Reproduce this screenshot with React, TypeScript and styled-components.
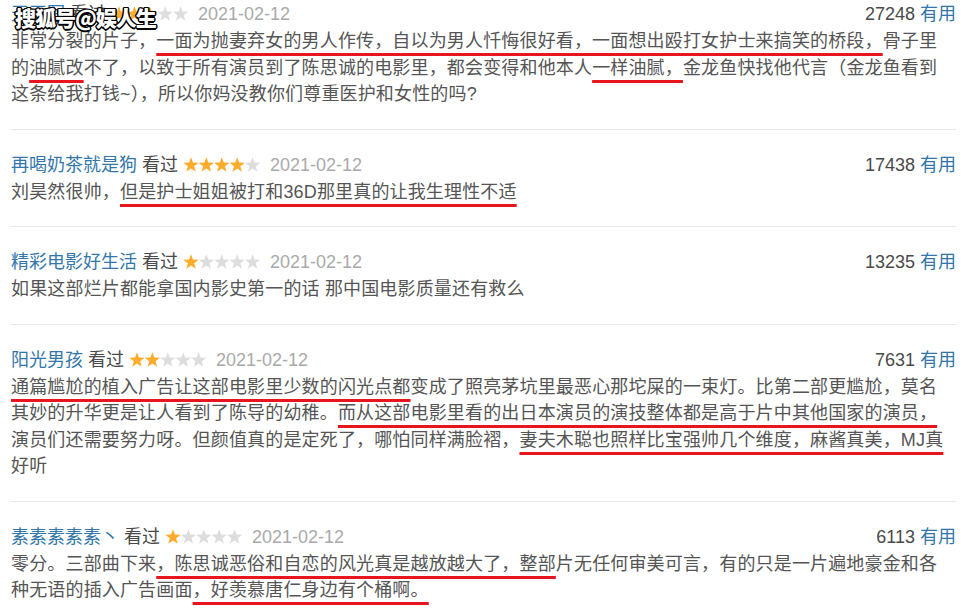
import React from "react";
import styled, { createGlobalStyle } from "styled-components";

const GlobalStyle = createGlobalStyle`
  html, body {
    margin: 0;
    padding: 0;
    background: #fff;
  }
  body {
    font-family: "Liberation Sans", "Noto Sans CJK SC", sans-serif;
  }
`;

const Page = styled.div`
  position: relative;
  width: 969px;
  height: 612px;
  overflow: hidden;
  box-sizing: border-box;
  padding: 1px 13px 0 11px;
`;

const Item = styled.div`
  padding: 22px 0 21px;
  border-bottom: 1px solid #e8e8e8;
  &:first-child {
    padding-top: 0;
  }
`;

const Header = styled.div`
  display: flex;
  align-items: center;
  height: 27px;
  font-size: 18px;
  line-height: 27px;
  white-space: nowrap;
`;

const Name = styled.span`
  color: #3377aa;
`;

const Watched = styled.span`
  color: #494949;
  margin-left: 5px;
`;

const StarRow = styled.svg`
  margin: 0 9px 1px 5px;
  flex: none;
`;

const DateText = styled.span`
  color: #aaa;
`;

const Votes = styled.span`
  margin-left: auto;
  color: #494949;
`;

const Useful = styled.span`
  color: #3377aa;
  margin-left: 5px;
`;

const Body = styled.p`
  margin: 0;
  padding-right: 8px;
  font-size: 18px;
  line-height: 26.5px;
  letter-spacing: 0.16px;
  color: #555;
`;

const Mark = styled.span`
  text-decoration: underline;
  text-decoration-color: #e8141e;
  text-decoration-thickness: 3px;
  text-underline-offset: 6px;
  text-decoration-skip-ink: none;
`;

const Watermark = styled.div`
  position: absolute;
  left: 15px;
  top: 4px;
  font-family: "Noto Sans CJK SC", sans-serif;
  font-size: 21px;
  font-weight: 900;
  line-height: 26px;
  color: #fff;
  letter-spacing: -1px;
  text-shadow: 1.5px 0 0 #000, -1.5px 0 0 #000, 0 1.5px 0 #000, 0 -1.5px 0 #000, 1px 1px 0 #000, -1px -1px 0 #000,
    1px -1px 0 #000, -1px 1px 0 #000;
`;

const STAR = "M8 0.2L9.95 5.6L15.7 5.8L11.15 9.3L12.75 14.8L8 11.55L3.25 14.8L4.85 9.3L0.3 5.8L6.05 5.6Z";

const Stars: React.FC<{ value: number }> = ({ value }) => (
  <StarRow width="78" height="16" viewBox="0 0 78 16">
    {[0, 1, 2, 3, 4].map((i) => (
      <path key={i} d={STAR} transform={`translate(${i * 15.4} 0)`} fill={i < value ? "#ffac2d" : "#dddddd"} />
    ))}
  </StarRow>
);

type Part = string | { u: string };

type Review = {
  name: string;
  stars: number;
  votes: string;
  body: Part[];
};

const reviews: Review[] = [
  {
    name: "天天写",
    stars: 3,
    votes: "27248",
    body: [
      "非常分裂的片子，",
      { u: "一面为抛妻弃女的男人作传，自以为男人忏悔很好看，一面想出殴打女护士来搞笑的桥段，" },
      "骨子里的",
      { u: "油腻改" },
      "不了，以致于所有演员到了陈思诚的电影里，都会变得和他本人",
      { u: "一样油腻，" },
      "金龙鱼快找他代言（金龙鱼看到这条给我打钱~），所以你妈没教你们尊重医护和女性的吗?",
    ],
  },
  {
    name: "再喝奶茶就是狗",
    stars: 4,
    votes: "17438",
    body: ["刘昊然很帅，", { u: "但是护士姐姐被打和36D那里真的让我生理性不适" }],
  },
  {
    name: "精彩电影好生活",
    stars: 1,
    votes: "13235",
    body: ["如果这部烂片都能拿国内影史第一的话 那中国电影质量还有救么"],
  },
  {
    name: "阳光男孩",
    stars: 2,
    votes: "7631",
    body: [
      { u: "通篇尴尬的植入广告让这部电影里少数的闪光点都" },
      "变成了照亮茅坑里最恶心那坨屎的一束灯。比第二部更尴尬，莫名其妙的升华更是让人看到了陈导的幼稚。",
      { u: "而从这部电影里看的出日本演员的演技整体都是高于片中其他国家的演员，" },
      "演员们还需要努力呀。但颜值真的是定死了，哪怕同样满脸褶，",
      { u: "妻夫木聪也照样比宝强帅几个维度，麻酱真美，MJ真" },
      "好听",
    ],
  },
  {
    name: "素素素素素丶",
    stars: 1,
    votes: "6113",
    body: [
      "零分。三部曲下来",
      { u: "，陈思诚恶俗和自恋的风光真是越放越大了，整部" },
      "片无任何审美可言，有的只是一片遍地豪金和各种无语的插入广告画面",
      { u: "，好羡慕唐仁身边有个桶啊。" },
    ],
  },
];

export default function App() {
  return (
    <>
      <GlobalStyle />
      <Page>
        {reviews.map((r, i) => (
          <Item key={i}>
            <Header>
              <Name>{r.name}</Name>
              <Watched>看过</Watched>
              <Stars value={r.stars} />
              <DateText>2021-02-12</DateText>
              <Votes>
                {r.votes}
                <Useful>有用</Useful>
              </Votes>
            </Header>
            <Body>
              {r.body.map((p, j) => (typeof p === "string" ? <span key={j}>{p}</span> : <Mark key={j}>{p.u}</Mark>))}
            </Body>
          </Item>
        ))}
        <Watermark>搜狐号@娱人生</Watermark>
      </Page>
    </>
  );
}
